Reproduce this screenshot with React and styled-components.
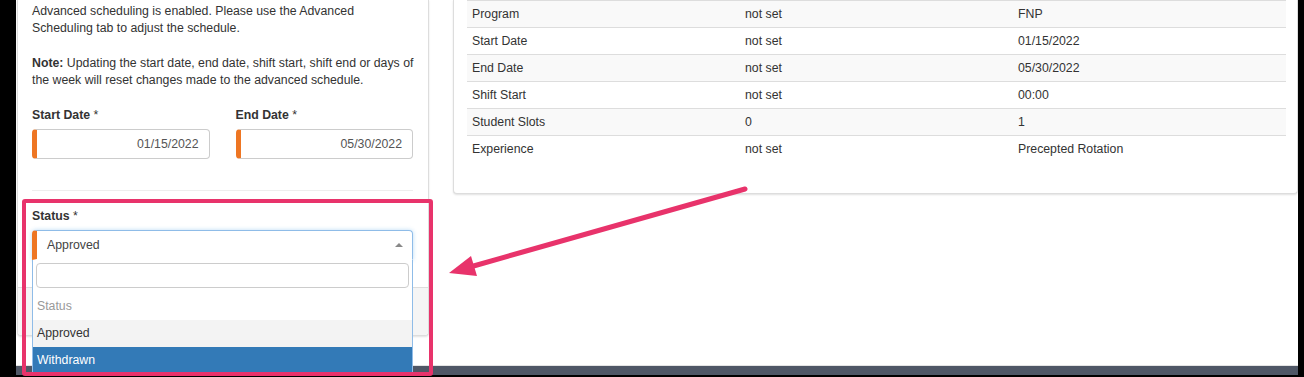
import styled, { createGlobalStyle } from "styled-components";

const GlobalStyle = createGlobalStyle`
  * { box-sizing: border-box; }
  body {
    margin: 0;
    background: #000;
    font-family: "Liberation Sans", Arial, sans-serif;
    font-size: 12.3px;
    color: #333;
  }
`;

const Screen = styled.div`
  position: relative;
  width: 1304px;
  height: 377px;
  overflow: hidden;
  background: #000;
  padding: 0 6px 0 16px;
  display: flex;
  flex-direction: column;
`;

const Content = styled.div`
  height: 366px;
  background: #fff;
  border-bottom: 1px solid #e4e4e4;
  display: flex;
  align-items: flex-start;
  gap: 24px;
  padding-left: 1px;
`;

const FooterBar = styled.div`
  height: 9px;
  background: #4f5766;
`;

const Card = styled.div`
  width: ${(p) => p.$width || "auto"};
  flex: ${(p) => (p.$width ? "none" : "1")};
  background: #fff;
  border: 1px solid #ddd;
  border-top: none;
  border-radius: 0 0 4px 4px;
  box-shadow: 0 1px 2px rgba(0, 0, 0, 0.12);
`;

const CardBody = styled.div`
  padding: 3px 15px 27px 14px;
`;

const CardFooter = styled.div`
  height: 48px;
  background: #f5f5f5;
  border-top: 1px solid #ddd;
  border-radius: 0 0 4px 4px;
`;

const Para = styled.p`
  margin: 0 0 18px;
  line-height: 17px;
  white-space: nowrap;
`;

const DateRow = styled.div`
  display: grid;
  grid-template-columns: 1fr 1fr;
  column-gap: 26px;
`;

const Field = styled.div`
  display: flex;
  flex-direction: column;
`;

const Label = styled.label`
  font-weight: bold;
  line-height: 17px;
  margin-bottom: 5px;

  span {
    font-weight: normal;
  }
`;

const DateInput = styled.div`
  height: 30px;
  border: 1px solid #ccc;
  border-left: 5px solid #ee7623;
  border-radius: 4px;
  display: flex;
  align-items: center;
  justify-content: flex-end;
  padding-right: 10px;
  color: #555;
`;

const Rule = styled.hr`
  border: none;
  border-top: 1px solid #eee;
  margin: 31px 0 17px;
`;

const SelectWrap = styled.div`
  position: relative;
  display: flex;
  flex-direction: column;
`;

const SelectBox = styled.div`
  height: 30px;
  border: 1px solid #8fbce8;
  border-left: 5px solid #ee7623;
  border-bottom-color: transparent;
  border-radius: 4px 4px 0 0;
  box-shadow: 0 0 4px rgba(102, 175, 233, 0.45);
  display: flex;
  align-items: center;
  justify-content: space-between;
  padding: 0 9px 0 10px;
  color: #444;
`;

const Caret = styled.span`
  width: 0;
  height: 0;
  border-left: 4px solid transparent;
  border-right: 4px solid transparent;
  border-bottom: 4px solid #888;
`;

const Dropdown = styled.div`
  position: absolute;
  top: 100%;
  left: 0;
  right: 0;
  z-index: 5;
  background: #fff;
  border: 1px solid #8fbce8;
  border-top: none;
  padding-top: 3px;
`;

const Search = styled.div`
  height: 25px;
  margin: 0 3px;
  border: 1px solid #ccc;
  border-radius: 4px;
`;

const GroupLabel = styled.div`
  padding: 10px 5px 5px 4px;
  line-height: 17px;
  color: #999;
`;

const Option = styled.div`
  padding: 5px 4px;
  line-height: 17px;
  background: ${(p) => (p.$active ? "#337ab7" : p.$selected ? "#f3f3f3" : "#fff")};
  color: ${(p) => (p.$active ? "#fff" : "#333")};
`;

const TableWrap = styled.div`
  padding: 0 11px 31px 13px;
`;

const Table = styled.table`
  width: 100%;
  border-collapse: collapse;
  table-layout: fixed;

  td {
    padding: 5px;
    line-height: 16px;
    border-top: 1px solid #ddd;
    color: #333;
  }

  tr:nth-child(odd) td {
    background: #f9f9f9;
  }
`;

const Highlight = styled.div`
  position: absolute;
  left: 22px;
  top: 199px;
  width: 411px;
  height: 177px;
  border: 4px solid #e8336b;
  border-radius: 3px;
  z-index: 10;
  pointer-events: none;
`;

const ArrowLayer = styled.svg`
  position: absolute;
  left: 0;
  top: 0;
  z-index: 10;
  pointer-events: none;
`;

const rows = [
  ["Program", "not set", "FNP"],
  ["Start Date", "not set", "01/15/2022"],
  ["End Date", "not set", "05/30/2022"],
  ["Shift Start", "not set", "00:00"],
  ["Student Slots", "0", "1"],
  ["Experience", "not set", "Precepted Rotation"],
];

export default function App() {
  return (
    <>
      <GlobalStyle />
      <Screen>
        <Content>
          <Card $width="412px">
            <CardBody>
              <Para>
                Advanced scheduling is enabled. Please use the Advanced
                <br />
                Scheduling tab to adjust the schedule.
              </Para>
              <Para>
                <strong>Note:</strong> Updating the start date, end date, shift
                start, shift end or days of
                <br />
                the week will reset changes made to the advanced schedule.
              </Para>
              <DateRow>
                <Field>
                  <Label>
                    Start Date <span>*</span>
                  </Label>
                  <DateInput>01/15/2022</DateInput>
                </Field>
                <Field>
                  <Label>
                    End Date <span>*</span>
                  </Label>
                  <DateInput>05/30/2022</DateInput>
                </Field>
              </DateRow>
              <Rule />
              <Field>
                <Label>
                  Status <span>*</span>
                </Label>
                <SelectWrap>
                  <SelectBox>
                    Approved
                    <Caret />
                  </SelectBox>
                  <Dropdown>
                    <Search />
                    <GroupLabel>Status</GroupLabel>
                    <Option $selected>Approved</Option>
                    <Option $active>Withdrawn</Option>
                  </Dropdown>
                </SelectWrap>
              </Field>
            </CardBody>
            <CardFooter />
          </Card>
          <Card>
            <TableWrap>
              <Table>
                <tbody>
                  {rows.map((r) => (
                    <tr key={r[0]}>
                      <td>{r[0]}</td>
                      <td>{r[1]}</td>
                      <td>{r[2]}</td>
                    </tr>
                  ))}
                </tbody>
              </Table>
            </TableWrap>
          </Card>
        </Content>
        <FooterBar />
        <Highlight />
        <ArrowLayer width="1304" height="377" viewBox="0 0 1304 377">
          <line
            x1="745"
            y1="189"
            x2="470"
            y2="267"
            stroke="#e8336b"
            strokeWidth="5"
            strokeLinecap="round"
          />
          <polygon points="449,273 471,256 477,276" fill="#e8336b" />
        </ArrowLayer>
      </Screen>
    </>
  );
}
